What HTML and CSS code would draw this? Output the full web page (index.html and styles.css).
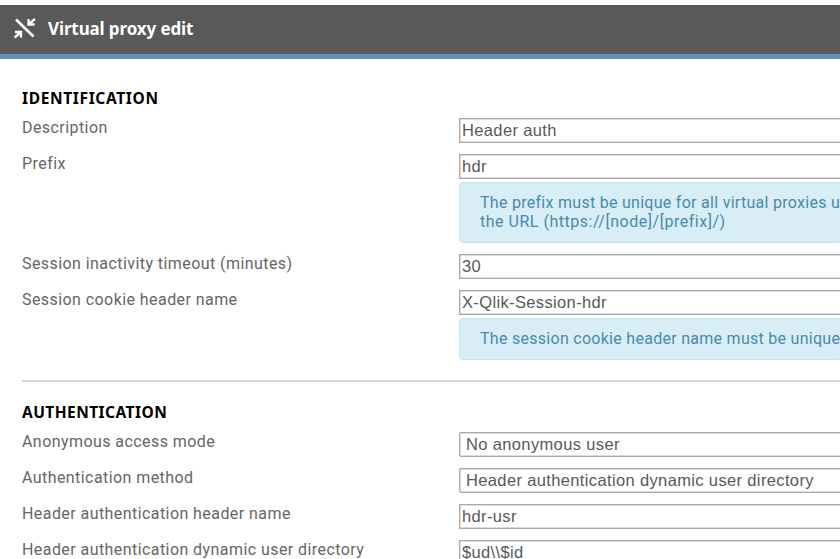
FILE: index.html
```html
<!DOCTYPE html>
<html lang="en">
<head>
<meta charset="utf-8">
<title>Virtual proxy edit</title>
<link rel="stylesheet" href="styles.css">
</head>
<body>
<header class="bar">
  <svg class="bar-icon" width="24" height="22" viewBox="0 0 24 22" fill="none" stroke="#fff" stroke-width="2.6">
    <path d="M3 2.500 20.500 19.500"/>
    <path d="M22 2 16 7M15.500 2V7.500H21.500" stroke-width="2.300"/>
    <path d="M1.500 20.500 7.500 15.500M2 15H8V20.500" stroke-width="2.300"/>
  </svg>
  <h1 class="bar-title">Virtual proxy edit</h1>
</header>
<main class="form">
  <section class="section">
    <h2 class="heading heading-wide">IDENTIFICATION</h2>
    <div class="row"><span class="label">Description</span><div class="field"><div class="input">Header auth</div></div></div>
    <div class="row"><span class="label">Prefix</span><div class="field"><div class="input">hdr</div><p class="hint">The prefix must be unique for all virtual proxies u<br><span class="hint-url">the URL (https://[node]/[prefix]/)</span></p></div></div>
    <div class="row"><span class="label">Session inactivity timeout (minutes)</span><div class="field"><div class="input">30</div></div></div>
    <div class="row"><span class="label">Session cookie header name</span><div class="field"><div class="input">X-Qlik-Session-hdr</div><p class="hint">The session cookie header name must be unique</p></div></div>
  </section>
  <section class="section divided">
    <h2 class="heading">AUTHENTICATION</h2>
    <div class="row"><span class="label">Anonymous access mode</span><div class="field"><div class="input select">No anonymous user</div></div></div>
    <div class="row"><span class="label">Authentication method</span><div class="field"><div class="input select">Header authentication dynamic user directory</div></div></div>
    <div class="row"><span class="label">Header authentication header name</span><div class="field"><div class="input">hdr-usr</div></div></div>
    <div class="row"><span class="label">Header authentication dynamic user directory</span><div class="field"><div class="input">$ud\\$id</div></div></div>
  </section>
</main>
</body>
</html>
```
FILE: styles.css
```css
* { box-sizing: border-box; }
html, body { height: 100%; overflow: hidden; }
body { margin: 0; padding-top: 5px; background: #fff; color: #595959; font-family: Roboto, sans-serif; font-size: 16px; }
.bar { display: flex; align-items: center; height: 54px; padding: 0 0 4px 13px; background: #595959; border-bottom: 5px solid #6190c3; }
.bar-icon { flex: none; margin-right: 11px; }
.bar-title { margin: 0; padding-top: 2px; color: #fff; font: 700 17px/22px "Noto Sans", sans-serif; white-space: nowrap; letter-spacing: -.12px; }
.form { padding-left: 22px; }
.section { display: flex; flex-direction: column; gap: 11px; padding-top: 29px; }
.divided { margin-top: 20px; padding-top: 20px; border-top: 2px solid #d6d6d6; }
.heading { margin: 0 0 -1px; color: #000; font: 700 15.500px/20px "Noto Sans", sans-serif; letter-spacing: .45px; }
.heading-wide { letter-spacing: .65px; }
.row { display: grid; grid-template-columns: 437px minmax(0, 1fr); align-items: start; }
.field { margin-right: -2px; }
.label { padding-top: 1px; color: #666; line-height: 18px; white-space: nowrap; letter-spacing: .43px; }
.input { height: 25px; padding-left: 2px; border: 1px solid #aaa; box-shadow: inset 0 0 0 .5px #bbb; font: 16.500px/23px "Liberation Sans", sans-serif; letter-spacing: .36px; white-space: nowrap; }
.select { padding-left: 6px; border-radius: 2px; }
.hint { margin: 3px 0 0; padding: 10px 0 11px 20px; border: 1px solid #bce8f1; border-radius: 4px; background: #d9edf7; color: #468bb0; line-height: 19px; letter-spacing: .28px; white-space: nowrap; }
.hint-url { letter-spacing: .52px; }
```
